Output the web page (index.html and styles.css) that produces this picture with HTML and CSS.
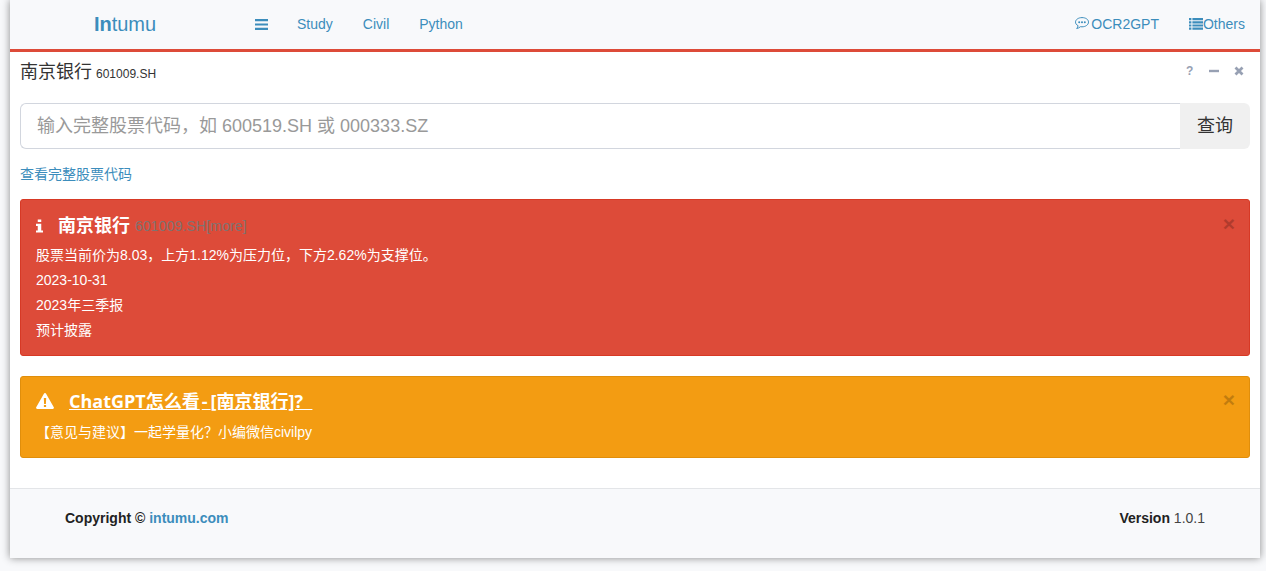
FILE: index.html
```html
<!DOCTYPE html>
<html lang="zh">
<head>
<meta charset="utf-8">
<title>南京银行 601009.SH</title>
<link rel="stylesheet" href="styles.css">
</head>
<body>
<div class="shell">
  <header class="navbar">
    <a class="brand"><b>In</b>tumu</a>
    <svg class="bars" viewBox="0 0 13 11"><path d="M0 0h13v2.2H0zM0 4.4h13v2.2H0zM0 8.8h13V11H0z"/></svg>
    <nav class="menu">
      <a>Study</a>
      <a>Civil</a>
      <a>Python</a>
    </nav>
    <nav class="menu-right">
      <a class="icon-link"><svg class="ic-comment" viewBox="0 0 14 13"><path d="M7 .6C3.400.6.500 2.600.500 5.100c0 1.500 1 2.800 2.600 3.600-.1.900-.6 1.900-1.400 2.800 1.500-.2 2.800-.9 3.700-1.800.5.100 1 .1 1.600.1 3.600 0 6.500-2 6.500-4.700S10.600.6 7 .6z" fill="none" stroke="currentColor" stroke-width="1"/><circle cx="4.200" cy="5.200" r="1"/><circle cx="7" cy="5.200" r="1"/><circle cx="9.800" cy="5.200" r="1"/></svg>OCR2GPT</a>
      <a class="icon-link"><svg class="ic-list" viewBox="0 0 14 12"><path d="M0 0h2.400v2.200H0zM3.400 0H14v2.200H3.400zM0 3.200h2.400v2.200H0zM3.400 3.200H14v2.200H3.400zM0 6.400h2.400v2.200H0zM3.400 6.400H14v2.200H3.400zM0 9.600h2.400v2.200H0zM3.400 9.600H14v2.200H3.400z"/></svg>Others</a>
    </nav>
  </header>

  <main class="content">
    <div class="box-head">
      <h1 class="box-title">南京银行 <small>601009.SH</small></h1>
      <div class="tools">
        <span class="tool">?</span>
        <svg class="tool-ic" viewBox="0 0 10 10"><path d="M0 3.800h10v2.400H0z"/></svg>
        <svg class="tool-ic" viewBox="0 0 10 10"><path d="M1.500 1.500l7 7M8.500 1.500l-7 7" stroke="currentColor" stroke-width="2.800" fill="none"/></svg>
      </div>
    </div>

    <form class="search">
      <input class="search-input" type="text" placeholder="输入完整股票代码，如 600519.SH 或 000333.SZ">
      <button class="search-btn" type="button">查询</button>
    </form>

    <a class="codes-link">查看完整股票代码</a>

    <section class="alert alert-red">
      <span class="close">×</span>
      <h4 class="alert-title">
        <svg class="ic-info" viewBox="0 0 8 15"><path d="M2 0h4v3H2zM0 5h6v7.500h2V15H0v-2.500h2V7.500H0z"/></svg>
        <span>南京银行</span> <small class="muted">601009.SH[more]</small>
      </h4>
      <p>股票当前价为8.03，上方1.12%为压力位，下方2.62%为支撑位。</p>
      <p>2023-10-31</p>
      <p>2023年三季报</p>
      <p>预计披露</p>
    </section>

    <section class="alert alert-orange">
      <span class="close">×</span>
      <h4 class="alert-title">
        <svg class="ic-warn" viewBox="0 0 18 16"><path fill-rule="evenodd" d="M9 0c.5 0 .9.300 1.100.700l7.700 13.500c.4.800-.1 1.800-1.100 1.800H1.300c-1 0-1.500-1-1.100-1.800L7.900.700C8.100.300 8.500 0 9 0zM7.800 5l.3 6h1.800l.3-6zM7.900 12v2h2.200v-2z"/></svg>
        <a class="gpt-link">ChatGPT怎么看<span class="gpt-dash">-</span>[南京银行]?&nbsp;&nbsp;</a>
      </h4>
      <p>【意见与建议】一起学量化？小编微信civilpy</p>
    </section>
  </main>

  <footer class="footer">
    <div><b>Copyright © <a>intumu.com</a></b></div>
    <div><b>Version</b> 1.0.1</div>
  </footer>
</div>
</body>
</html>
```
FILE: styles.css
```css
* { box-sizing: border-box; }
html, body { margin: 0; height: 100%; }
body {
  background: #f8f9fb;
  font-family: "Liberation Sans", "Noto Sans CJK SC", sans-serif;
  font-size: 14px;
  color: #333;
  padding: 0 6px 13px 10px;
  overflow: hidden;
}
a { color: #3c8dbc; text-decoration: none; }
.shell {
  width: 1250px;
  height: 558px;
  background: #fff;
  box-shadow: 0 0 8px rgba(0,0,0,.45);
  display: flex;
  flex-direction: column;
}
.navbar {
  height: 52px;
  flex: none;
  background: #f8f9fb;
  border-bottom: 3px solid #dd4b39;
  display: flex;
  align-items: center;
}
.brand { width: 230px; text-align: center; font-size: 20px; color: #3c8dbc; }
.brand b { font-weight: 700; }
.bars { width: 13px; height: 11px; margin: 0 0 1px 15px; fill: #3c8dbc; }
.menu { display: flex; gap: 30px; margin: 0 0 2px 29px; }
.menu-right { display: flex; gap: 30px; margin: 0 15px 2px auto; }
.icon-link { display: flex; align-items: center; }
.ic-comment { width: 14px; height: 13px; margin-right: 2px; fill: currentColor; }
.ic-list { width: 14px; height: 12px; margin-right: 0; fill: currentColor; }

.content { flex: 1; padding: 0 10px; }
.box-head {
  height: 51px;
  display: flex;
  justify-content: space-between;
  padding-top: 9px;
}
.box-title { margin: 0; font-size: 18px; font-weight: 400; line-height: 22px; color: #333; }
.box-title small { font-size: 12px; margin-left: -1px; }
.tools { display: flex; gap: 15px; align-items: flex-start; padding: 4px 6px 0 0; color: #97a0b3; }
.tool { font-size: 12px; font-weight: 700; line-height: 13px; width: 8px; }
.tool-ic { width: 10px; height: 10px; margin-top: 1px; fill: currentColor; color: #97a0b3; }

.search { display: flex; height: 46px; }
.search-input {
  flex: 1;
  min-width: 0;
  height: 46px;
  border: 1px solid #d2d6de;
  border-right: 0;
  border-radius: 6px 0 0 6px;
  padding: 0 15px 0 16px;
  font: 18px "Liberation Sans", "Noto Sans CJK SC", sans-serif;
  outline: none;
}
.search-input::placeholder { color: #999; opacity: 1; }
.search-btn {
  width: 70px;
  border: 0;
  border-radius: 0 6px 6px 0;
  background: #f0f0f0;
  color: #333;
  font: 18px "Liberation Sans", "Noto Sans CJK SC", sans-serif;
  padding: 0 0 4px;
}
.codes-link { display: block; margin: 15px 0 14px; line-height: 21px; }

.alert {
  position: relative;
  border-radius: 3px;
  color: #fff;
  margin-bottom: 20px;
  border: 1px solid;
}
.alert-red { height: 157px; padding: 16px 15px 0; background: #dd4b39; border-color: #d73925; }
.alert-orange { height: 82px; padding: 14px 15px 0; background: #f39c12; border-color: #e08e0b; }
.alert p { margin: 0 0 5px; line-height: 20px; }
.alert-title {
  margin: 0 0 9px;
  font-size: 18px;
  font-weight: 700;
  line-height: 20px;
  display: flex;
  align-items: center;
}
.alert-orange .alert-title { margin-bottom: 11px; }
.alert-title small { font-weight: 400; font-size: 14px; margin-left: 5px; letter-spacing: .14px; }
.muted { color: #777; opacity: .9; }
.ic-info { width: 7px; height: 14px; fill: #fff; margin-right: 15px; }
.ic-warn { width: 18px; height: 16px; fill: #fff; margin-right: 15px; }
.gpt-link { color: #fff; text-decoration: underline; font-family: "Open Sans", "Noto Sans CJK SC", sans-serif; }
.gpt-dash { padding-left: 2px; letter-spacing: 3px; }
.close {
  position: absolute;
  right: 14px;
  font-size: 21px;
  line-height: 24px;
  font-weight: 700;
  color: #000;
  opacity: .2;
}
.alert-red .close { top: 12px; }
.alert-orange .close { top: 11px; }

.footer {
  height: 70px;
  flex: none;
  background: #f8f9fb;
  border-top: 1px solid #e3e5e8;
  display: flex;
  justify-content: space-between;
  align-items: center;
  padding: 0 55px 12px;
  color: #444;
}
.footer b { color: #222; }
.footer a { color: #3c8dbc; }
```
